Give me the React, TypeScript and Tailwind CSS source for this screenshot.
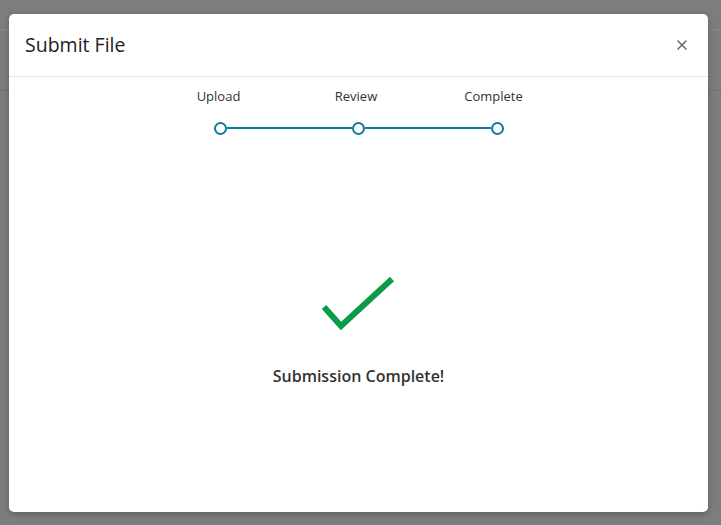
import { X } from "lucide-react";

const STEPS = ["Upload", "Review", "Complete"];

export default function App() {
  return (
    <div className="relative h-[525px] w-[721px] overflow-hidden bg-[#7d7d7d] font-['Open_Sans',sans-serif]">
      {/* page behind the overlay */}
      <div className="h-[30px] border-b border-[#888]" />
      <div className="h-[61px] border-b border-[#727272]" />

      {/* dialog */}
      <div className="absolute left-[9px] top-[14px] flex h-[498px] w-[699px] flex-col rounded-[5px] bg-white shadow-[0_2px_6px_rgba(0,0,0,0.25)]">
        <div className="flex h-[63px] items-center justify-between border-b border-[#e6e6e6] pl-4 pr-[18px]">
          <h2 className="text-[19.5px] font-normal text-[#222]">Submit File</h2>
          <X size={16} strokeWidth={2.2} className="text-[#666]" />
        </div>

        <div className="flex flex-col items-center pt-[10px]">
          <div className="mr-[5px] flex w-[375px] justify-between">
            {STEPS.map((s) => (
              <span key={s} className="w-[100px] text-center text-[13px] text-[#333]">
                {s}
              </span>
            ))}
          </div>
          <div className="mt-[15px] flex w-[290px] items-center">
            <span className="h-[13px] w-[13px] shrink-0 rounded-full border-2 border-[#0d7aa3] bg-white" />
            <span className="h-[2px] flex-1 bg-[#0d7aa3]" />
            <span className="h-[13px] w-[13px] shrink-0 rounded-full border-2 border-[#0d7aa3] bg-white" />
            <span className="h-[2px] flex-1 bg-[#0d7aa3]" />
            <span className="h-[13px] w-[13px] shrink-0 rounded-full border-2 border-[#0d7aa3] bg-white" />
          </div>
        </div>

        <div className="flex flex-col items-center pt-[142px]">
          <svg width="74" height="58" viewBox="0 0 74 58" fill="none">
            <path d="M2 30 L19 49 L70 2" stroke="#0a9c48" strokeWidth="6" />
          </svg>
          <p className="mt-[29px] text-[16px] font-[560] text-[#333]">Submission Complete!</p>
        </div>
      </div>
    </div>
  );
}
